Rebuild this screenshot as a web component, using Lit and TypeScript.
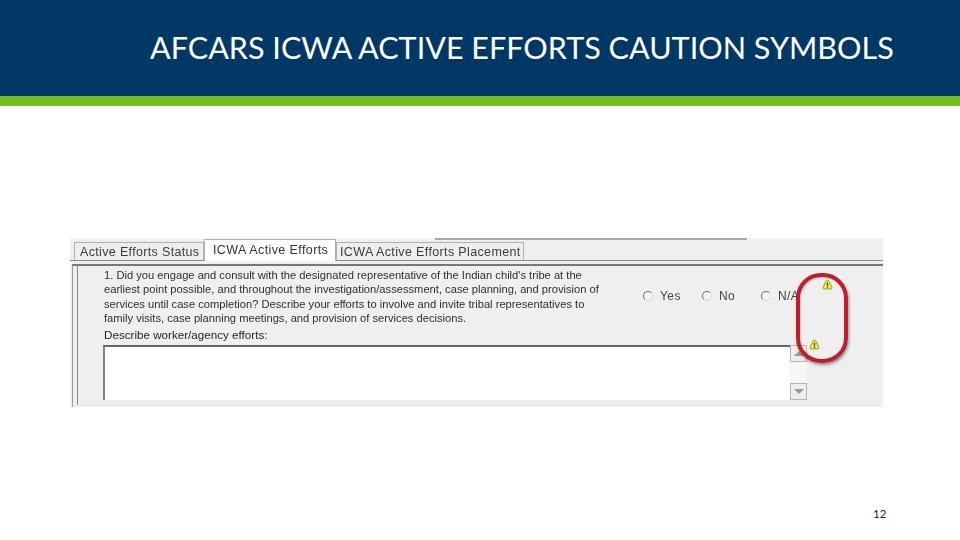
import { LitElement, html, css } from "lit";
import { customElement } from "lit/decorators.js";

const warn = html`<svg viewBox="0 0 12 12" width="11" height="11">
  <path d="M6 1.2 C7.6 1.2 8 3 8.6 4.4 L10.8 9.2 C11.2 10.2 10.6 10.8 9.6 10.8 H2.4 C1.4 10.8 0.8 10.2 1.2 9.2 L3.4 4.4 C4 3 4.4 1.2 6 1.2 Z" fill="#f6f52a" stroke="#8f8c28" stroke-width="1"/>
  <path d="M6 3.8 V7.4 M6 8.3 V9.6" stroke="#45421a" stroke-width="1.5"/>
</svg>`;

@customElement("app-root")
export class AppRoot extends LitElement {
  static styles = css`
    :host { display: block; width: 960px; height: 540px; background: #fff; overflow: hidden; position: relative; }
    .head { height: 96px; background: #003865; display: flex; align-items: center; padding-left: 150px; box-sizing: border-box; }
    .head h1 { margin: 0; font: 400 30.55px/1 Lato, sans-serif; color: #fff; white-space: nowrap; }
    .rule { height: 10px; background: #78bc20; }
    .stage { padding: 132px 0 0 70px; }
    .panel { position: relative; width: 813px; height: 169px; background: #efefef; font-family: "Liberation Sans", Arial, sans-serif; color: #2e2e2e; filter: blur(0.35px); }
    .topline { position: absolute; left: 365px; top: 0; width: 312px; height: 2px; background: #a9a9a9; }
    .topwhite { position: absolute; left: 0; right: 0; top: 0; height: 1px; background: #f6f6f6; }
    .tabs { display: flex; align-items: flex-end; height: 23px; padding: 0 0 0 4px; border-bottom: 1px solid #8a8a8a; position: relative; box-sizing: border-box; }
    .tab { height: 18px; box-sizing: border-box; border: 1px solid #b0b0b0; border-bottom: 0; font-size: 12.5px; line-height: 18px; padding-left: 5px; color: #3c3c3c; letter-spacing: 0.34px; white-space: nowrap; background: #eeeeee; }
    .t1 { width: 130px; }
    .t2 { width: 132px; height: 22px; background: #fff; padding-left: 8px; line-height: 20px; margin-bottom: -1px; color: #333; position: relative; letter-spacing: 0.4px; }
    .t3 { width: 188px; padding-left: 3px; letter-spacing: 0.36px; }
    .frame { margin: 3px 0 0 2px; height: 143px; border-top: 2px solid #777; border-left: 1px solid #9a9a9a; box-sizing: border-box; }
    .inner { margin-left: 4px; border-left: 1px solid #888; height: 100%; padding: 2px 0 0 26px; box-sizing: border-box; margin-top: -2px; border-top: 2px solid #777; }
    .row { display: flex; height: 59px; }
    .q { width: 539px; font-size: 11.17px; line-height: 14.4px; }
    .q span { display: block; white-space: nowrap; }
    .radios { display: flex; align-items: flex-start; padding-top: 21px; font-size: 12px; color: #444; letter-spacing: 0.4px; line-height: 14px; }
    .radio { display: flex; align-items: center; gap: 7px; }
    .radio i { display: block; width: 10px; height: 10px; border-radius: 50%; border: 1px solid #707070; border-right-color: #ddd; border-bottom-color: #ccc; box-sizing: border-box; background: #f4f4f4; }
    .r1 { width: 59px; }
    .r2 { width: 59px; }
    .label { font-size: 11.65px; line-height: 14px; margin-top: 1px; color: #1e1e1e; }
    .box { margin: 3px 0 0 -1px; width: 704px; height: 55px; background: #fff; border-top: 2px solid #666; border-left: 2px solid #808080; box-sizing: border-box; display: flex; justify-content: flex-end; }
    .sb { width: 17px; height: 55px; margin-top: -2px; background: #f6f6f6; display: flex; flex-direction: column; justify-content: space-between; }
    .btn { height: 17px; border: 1px solid #b5b5b5; box-sizing: border-box; background: #eee; display: flex; align-items: center; justify-content: center; }
    .up { width: 0; height: 0; border: 5px solid transparent; border-top: 0; border-bottom: 5px solid #999; }
    .down { width: 0; height: 0; border: 5px solid transparent; border-bottom: 0; border-top: 5px solid #999; }
    .oval { position: absolute; left: 726px; top: 35px; width: 52px; height: 90px; border: 4px solid #bd1f2b; border-radius: 25px; box-sizing: border-box; box-shadow: 1px 2px 3px rgba(0,0,0,0.4), inset 1px 1px 2px rgba(0,0,0,0.2); }
    .w { position: absolute; display: block; line-height: 0; }
    .w1 { left: 752px; top: 41px; }
    .w2 { left: 739px; top: 101px; }
    .foot { position: absolute; left: 873px; top: 507px; font: 11.5px/14px Lato, sans-serif; color: #222; }
  `;

  render() {
    return html`
      <header class="head"><h1>AFCARS ICWA ACTIVE EFFORTS CAUTION SYMBOLS</h1></header>
      <div class="rule"></div>
      <div class="stage">
        <div class="panel">
          <div class="topwhite"></div>
          <div class="topline"></div>
          <div class="tabs">
            <div class="tab t1">Active Efforts Status</div>
            <div class="tab t2">ICWA Active Efforts</div>
            <div class="tab t3">ICWA Active Efforts Placement</div>
          </div>
          <div class="frame">
            <div class="inner">
              <div class="row">
                <div class="q">
                  <span>1. Did you engage and consult with the designated representative of the Indian child's tribe at the</span>
                  <span>earliest point possible, and throughout the investigation/assessment, case planning, and provision of</span>
                  <span>services until case completion? Describe your efforts to involve and invite tribal representatives to</span>
                  <span>family visits, case planning meetings, and provision of services decisions.</span>
                </div>
                <div class="radios">
                  <div class="radio r1"><i></i>Yes</div>
                  <div class="radio r2"><i></i>No</div>
                  <div class="radio"><i></i>N/A</div>
                </div>
              </div>
              <div class="label">Describe worker/agency efforts:</div>
              <div class="box">
                <div class="sb">
                  <div class="btn"><div class="up"></div></div>
                  <div class="btn"><div class="down"></div></div>
                </div>
              </div>
            </div>
          </div>
          <div class="oval"></div>
          <span class="w w1">${warn}</span>
          <span class="w w2">${warn}</span>
        </div>
      </div>
      <div class="foot">12</div>
    `;
  }
}
